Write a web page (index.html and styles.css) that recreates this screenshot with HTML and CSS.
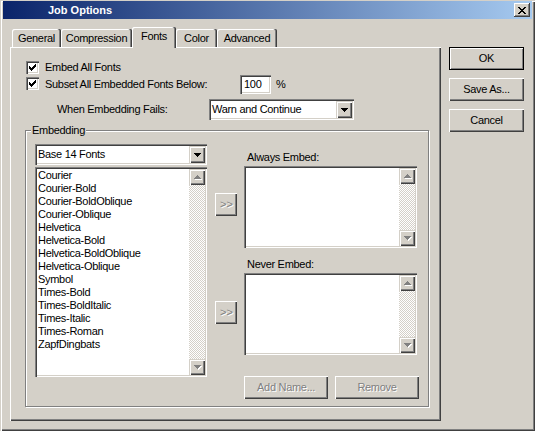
FILE: index.html
```html
<!DOCTYPE html>
<html>
<head>
<meta charset="utf-8">
<title>Job Options</title>
<link rel="stylesheet" href="styles.css">
</head>
<body>
<div class="window">
  <div class="titlebar">
    <span class="title">Job Options</span>
    <span class="close"><svg width="8" height="7" viewBox="0 0 8 7" shape-rendering="crispEdges"><path fill="#000" d="M0 0h2v1h-2z M6 0h2v1h-2z M1 1h2v1h-2z M5 1h2v1h-2z M2 2h4v1h-4z M3 3h2v1h-2z M2 4h4v1h-4z M1 5h2v1h-2z M5 5h2v1h-2z M0 6h2v1h-2z M6 6h2v1h-2z"/></svg></span>
  </div>
  <div class="client">
    <div class="tabs-area">
      <div class="tabrow">
        <div class="tab t-general">General</div>
        <div class="tab t-compression">Compression</div>
        <div class="tab t-fonts active">Fonts</div>
        <div class="tab t-color">Color</div>
        <div class="tab t-advanced">Advanced</div>
      </div>
      <div class="panel">
        <div class="row row1">
          <span class="check"><svg width="7" height="7" viewBox="0 0 7 7" shape-rendering="crispEdges"><path fill="#000" d="M6 0h1v1h-1z M5 1h2v1h-2z M0 2h1v1h-1z M4 2h3v1h-3z M0 3h2v1h-2z M3 3h3v1h-3z M0 4h5v1h-5z M1 5h3v1h-3z M2 6h1v1h-1z"/></svg></span>
          <span class="check-label">Embed All Fonts</span>
        </div>
        <div class="row row2">
          <span class="check"><svg width="7" height="7" viewBox="0 0 7 7" shape-rendering="crispEdges"><path fill="#000" d="M6 0h1v1h-1z M5 1h2v1h-2z M0 2h1v1h-1z M4 2h3v1h-3z M0 3h2v1h-2z M3 3h3v1h-3z M0 4h5v1h-5z M1 5h3v1h-3z M2 6h1v1h-1z"/></svg></span>
          <span class="check-label subset-label">Subset All Embedded Fonts Below:</span>
          <span class="textbox">100</span>
          <span class="pct">%</span>
        </div>
        <div class="row row3">
          <span class="fails-label">When Embedding Fails:</span>
          <div class="combo fails-combo">
            <span class="combo-text">Warn and Continue</span>
            <span class="combo-btn"><svg width="7" height="4" viewBox="0 0 7 4" shape-rendering="crispEdges"><path fill="#000" d="M0 0h7v1h-1v1h-1v1h-1v1h-1V3H2V2H1V1H0z"/></svg></span>
          </div>
        </div>
        <div class="group">
          <span class="group-label">Embedding</span>
          <div class="group-body">
            <div class="col-left">
              <div class="combo base-combo">
                <span class="combo-text">Base 14 Fonts</span>
                <span class="combo-btn"><svg width="7" height="4" viewBox="0 0 7 4" shape-rendering="crispEdges"><path fill="#000" d="M0 0h7v1h-1v1h-1v1h-1v1h-1V3H2V2H1V1H0z"/></svg></span>
              </div>
              <div class="listbox fontlist">
                <ul class="items">
                  <li>Courier</li>
                  <li>Courier-Bold</li>
                  <li>Courier-BoldOblique</li>
                  <li>Courier-Oblique</li>
                  <li>Helvetica</li>
                  <li>Helvetica-Bold</li>
                  <li>Helvetica-BoldOblique</li>
                  <li>Helvetica-Oblique</li>
                  <li>Symbol</li>
                  <li>Times-Bold</li>
                  <li>Times-BoldItalic</li>
                  <li>Times-Italic</li>
                  <li>Times-Roman</li>
                  <li>ZapfDingbats</li>
                </ul>
                <div class="vscroll">
                  <span class="sbtn"><svg width="8" height="5" viewBox="0 0 8 5" shape-rendering="crispEdges"><path fill="#fff" transform="translate(1 1)" d="M3 0h1v1h1v1h1v1h1v1H0V3h1V2h1V1h1z"/><path fill="#808080" d="M3 0h1v1h1v1h1v1h1v1H0V3h1V2h1V1h1z"/></svg></span>
                  <span class="track"></span>
                  <span class="sbtn"><svg width="8" height="5" viewBox="0 0 8 5" shape-rendering="crispEdges"><path fill="#fff" transform="translate(1 1)" d="M0 0h7v1h-1v1h-1v1h-1v1h-1V3H2V2H1V1H0z"/><path fill="#808080" d="M0 0h7v1h-1v1h-1v1h-1v1h-1V3H2V2H1V1H0z"/></svg></span>
                </div>
              </div>
            </div>
            <div class="col-mid">
              <span class="btn disabled arrow-btn a1">&gt;&gt;</span>
              <span class="btn disabled arrow-btn a2">&gt;&gt;</span>
            </div>
            <div class="col-right">
              <div class="lbl">Always Embed:</div>
              <div class="listbox small">
                <div class="items"></div>
                <div class="vscroll">
                  <span class="sbtn"><svg width="8" height="5" viewBox="0 0 8 5" shape-rendering="crispEdges"><path fill="#fff" transform="translate(1 1)" d="M3 0h1v1h1v1h1v1h1v1H0V3h1V2h1V1h1z"/><path fill="#808080" d="M3 0h1v1h1v1h1v1h1v1H0V3h1V2h1V1h1z"/></svg></span>
                  <span class="track"></span>
                  <span class="sbtn"><svg width="8" height="5" viewBox="0 0 8 5" shape-rendering="crispEdges"><path fill="#fff" transform="translate(1 1)" d="M0 0h7v1h-1v1h-1v1h-1v1h-1V3H2V2H1V1H0z"/><path fill="#808080" d="M0 0h7v1h-1v1h-1v1h-1v1h-1V3H2V2H1V1H0z"/></svg></span>
                </div>
              </div>
              <div class="lbl never">Never Embed:</div>
              <div class="listbox small">
                <div class="items"></div>
                <div class="vscroll">
                  <span class="sbtn"><svg width="8" height="5" viewBox="0 0 8 5" shape-rendering="crispEdges"><path fill="#fff" transform="translate(1 1)" d="M3 0h1v1h1v1h1v1h1v1H0V3h1V2h1V1h1z"/><path fill="#808080" d="M3 0h1v1h1v1h1v1h1v1H0V3h1V2h1V1h1z"/></svg></span>
                  <span class="track"></span>
                  <span class="sbtn"><svg width="8" height="5" viewBox="0 0 8 5" shape-rendering="crispEdges"><path fill="#fff" transform="translate(1 1)" d="M0 0h7v1h-1v1h-1v1h-1v1h-1V3H2V2H1V1H0z"/><path fill="#808080" d="M0 0h7v1h-1v1h-1v1h-1v1h-1V3H2V2H1V1H0z"/></svg></span>
                </div>
              </div>
              <div class="btnrow">
                <span class="btn disabled wide">Add Name...</span>
                <span class="btn disabled wide">Remove</span>
              </div>
            </div>
          </div>
        </div>
      </div>
    </div>
    <div class="buttons">
      <span class="btn default">OK</span>
      <span class="btn">Save As...</span>
      <span class="btn">Cancel</span>
    </div>
  </div>
</div>
</body>
</html>
```
FILE: styles.css
```css
* { box-sizing: border-box; }
html, body { margin: 0; padding: 0; }
body {
  width: 535px;
  height: 431px;
  overflow: hidden;
  background: #d4d0c8;
  font-family: "Liberation Sans", Arial, sans-serif;
  font-size: 11px;
  line-height: 13px;
  letter-spacing: -0.3px;
  color: #000;
}
.window {
  width: 535px;
  height: 431px;
  background: #d4d0c8;
  padding: 1px 3px 0 3px;
  box-shadow: inset 1px 1px #d4d0c8, inset 2px 2px #fff, inset -1px -1px #404040, inset -2px -2px #808080;
}
.titlebar {
  height: 18px;
  display: flex;
  align-items: center;
  padding: 0 2px 0 45px;
  background: linear-gradient(to right, #0a246a, #a6caf0);
}
.title {
  flex: 1;
  color: #fff;
  font-weight: bold;
  letter-spacing: 0;
}
.close {
  width: 16px;
  height: 14px;
  display: flex;
  align-items: center;
  justify-content: center;
  background: #d4d0c8;
  box-shadow: inset -1px -1px #404040, inset 1px 1px #fff, inset -2px -2px #808080;
}
.close svg, .check svg, .combo-btn svg, .sbtn svg { display: block; }

.client {
  display: flex;
  gap: 8px;
  padding: 8px 0 0 7px;
}
.tabs-area { width: 431px; }
.tabrow {
  display: flex;
  align-items: flex-end;
  height: 20px;
  padding-left: 2px;
}
.tab {
  height: 18px;
  display: flex;
  align-items: center;
  justify-content: center;
  background: #d4d0c8;
  border-radius: 2px 2px 0 0;
  box-shadow: inset -1px 0 #404040, inset -2px 0 #808080, inset 1px 1px #fff;
}
.t-general { width: 49px; }
.t-compression { width: 71px; }
.t-fonts { width: 44px; }
.t-color { width: 41px; }
.t-advanced { width: 60px; }
.tab.active {
  height: 21px;
  margin-bottom: -1px;
  padding-bottom: 2px;
  position: relative;
  z-index: 1;
}
.panel {
  height: 374px;
  padding: 14px 0 0 16px;
  box-shadow: inset 1px 1px #fff, inset -1px -1px #404040, inset -2px -2px #808080;
}
.row { display: flex; align-items: center; }
.row1 { height: 13px; }
.row2 { height: 19px; margin-top: 1px; }
.row3 { height: 21px; margin-top: 5px; }
.check {
  width: 13px;
  height: 13px;
  flex: none;
  padding: 3px;
  background: #fff;
  box-shadow: inset 1px 1px #808080, inset 2px 2px #404040, inset -1px -1px #fff, inset -2px -2px #d4d0c8;
}
.row2 .check { margin-bottom: 2px; }
.check-label { margin-left: 6px; }
.subset-label { width: 195px; }
.textbox, .combo, .listbox {
  background: #fff;
  box-shadow: inset 1px 1px #808080, inset 2px 2px #404040, inset -1px -1px #fff, inset -2px -2px #d4d0c8;
}
.textbox {
  width: 31px;
  height: 19px;
  padding: 3px 0 0 4px;
}
.pct { margin-left: 5px; }
.fails-label {
  width: 183px;
  padding-left: 31px;
}
.combo {
  display: flex;
  align-items: center;
  height: 21px;
  padding: 2px;
}
.combo-text { flex: 1; padding-left: 1px; }
.combo-btn {
  width: 16px;
  height: 17px;
  display: flex;
  align-items: center;
  justify-content: center;
  background: #d4d0c8;
  box-shadow: inset 1px 1px #d4d0c8, inset 2px 2px #fff, inset -1px -1px #404040, inset -2px -2px #808080;
}
.fails-combo { width: 145px; }

.group {
  margin: 10px 0 0 -1px;
  width: 404px;
  height: 277px;
  border: 1px solid #808080;
  box-shadow: inset 1px 1px #fff, 1px 1px #fff;
}
.group-label {
  display: block;
  width: max-content;
  height: 13px;
  margin: -7px 0 0 5px;
  padding: 0 1px;
  background: #d4d0c8;
}
.group-body {
  display: flex;
  padding: 7px 0 0 9px;
}
.col-left { width: 172px; }
.base-combo { width: 172px; }
.listbox {
  display: flex;
  padding: 2px;
}
.fontlist { margin-top: 2px; height: 210px; }
.items {
  flex: 1;
  margin: 0;
  padding: 0 0 0 1px;
  list-style: none;
}
.items li { height: 13px; white-space: nowrap; }
.vscroll {
  width: 16px;
  display: flex;
  flex-direction: column;
}
.sbtn {
  width: 16px;
  height: 16px;
  flex: none;
  display: flex;
  align-items: center;
  justify-content: center;
  padding: 0 0 0 1px;
  background: #d4d0c8;
  box-shadow: inset 1px 1px #d4d0c8, inset 2px 2px #fff, inset -1px -1px #404040, inset -2px -2px #808080;
}
.track {
  flex: 1;
  background: repeating-conic-gradient(#fff 0 25%, #d4d0c8 0 50%) 0 0 / 2px 2px;
}
.col-mid {
  width: 22px;
  margin-left: 8px;
  display: flex;
  flex-direction: column;
}
.a1 { margin-top: 49px; }
.a2 { margin-top: 85px; }
.col-right {
  width: 175px;
  margin-left: 7px;
}
.lbl { margin-top: 7px; padding-left: 3px; height: 13px; }
.lbl.never { margin-top: 10px; }
.small { width: 173px; height: 82px; margin-top: 2px; }
.btnrow {
  display: flex;
  gap: 7px;
  margin-top: 21px;
}

.buttons {
  width: 75px;
  display: flex;
  flex-direction: column;
  gap: 8px;
  padding-top: 20px;
}
.btn {
  height: 23px;
  display: flex;
  align-items: center;
  justify-content: center;
  background: #d4d0c8;
  box-shadow: inset 1px 1px #fff, inset -1px -1px #404040, inset -2px -2px #808080;
}
.btn.default {
  border: 1px solid #000;
  box-shadow: inset 1px 1px #fff, inset -1px -1px #808080;
}
.btn.disabled {
  color: #808080;
  text-shadow: 1px 1px 0 #fff;
}
.arrow-btn { width: 22px; font-size: 11px; letter-spacing: 0; padding-left: 1px; }
.wide { width: 84px; }
```
